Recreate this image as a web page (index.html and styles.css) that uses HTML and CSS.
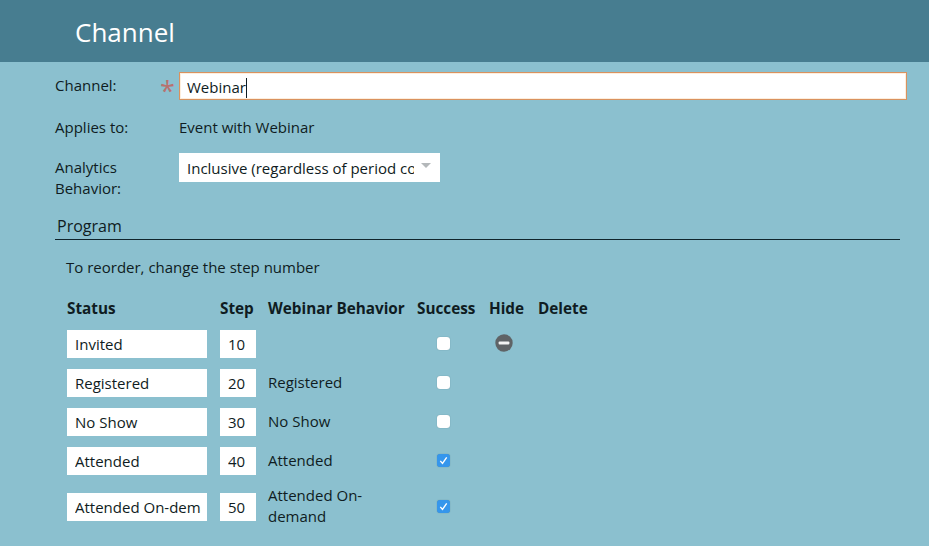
FILE: index.html
```html
<!DOCTYPE html>
<html lang="en">
<head>
  <meta charset="UTF-8">
  <title>Channel</title>
  <link rel="stylesheet" href="styles.css">
</head>
<body>

  <div class="header">
    <h1>Channel</h1>
  </div>

  <div class="content">
    <div class="form-row row-channel">
      <label>Channel:</label>
      <span class="required">*</span>
      <div class="channel-input">Webinar<span class="caret"></span></div>
    </div>

    <div class="form-row row-applies">
      <label>Applies to:</label>
      <span></span>
      <div class="value">Event with Webinar</div>
    </div>

    <div class="form-row row-analytics">
      <label>Analytics<br>Behavior:</label>
      <span></span>
      <div class="select">
        <span class="select-text">Inclusive (regardless of period cost)</span>
        <span class="select-arrow"></span>
      </div>
    </div>

    <h2 class="section-title">Program</h2>
    <p class="hint">To reorder, change the step number</p>

    <div class="status-row status-head">
      <div>Status</div>
      <div>Step</div>
      <div>Webinar Behavior</div>
      <div>Success</div>
      <div>Hide</div>
      <div>Delete</div>
    </div>

    <!-- Status rows -->
    <div class="status-row">
      <input class="status-input" type="text" value="Invited">
      <input class="step-input" type="text" value="10">
      <div></div>
      <div><span class="checkbox"></span></div>
      <div>
        <svg class="hide-icon" width="18" height="18" viewBox="0 0 18 18">
          <circle cx="9" cy="9" r="8.7" fill="#5f6366"/>
          <rect x="3.6" y="7.6" width="10.8" height="2.8" rx="1" fill="#f2f2f2"/>
        </svg>
      </div>
      <div></div>
    </div>

    <div class="status-row">
      <input class="status-input" type="text" value="Registered">
      <input class="step-input" type="text" value="20">
      <div class="behavior">Registered</div>
      <div><span class="checkbox"></span></div>
      <div></div>
      <div></div>
    </div>

    <div class="status-row">
      <input class="status-input" type="text" value="No Show">
      <input class="step-input" type="text" value="30">
      <div class="behavior">No Show</div>
      <div><span class="checkbox"></span></div>
      <div></div>
      <div></div>
    </div>

    <div class="status-row">
      <input class="status-input" type="text" value="Attended">
      <input class="step-input" type="text" value="40">
      <div class="behavior">Attended</div>
      <div>
        <span class="checkbox checked">
          <svg width="13" height="13" viewBox="0 0 13 13"><path d="M3.3 6.9l2.2 2.5 4.2-6" fill="none" stroke="#fff" stroke-width="1.4"/></svg>
        </span>
      </div>
      <div></div>
      <div></div>
    </div>

    <div class="status-row row-last">
      <input class="status-input" type="text" value="Attended On-demand">
      <input class="step-input" type="text" value="50">
      <div class="behavior">Attended On-<br>demand</div>
      <div>
        <span class="checkbox checked">
          <svg width="13" height="13" viewBox="0 0 13 13"><path d="M3.3 6.9l2.2 2.5 4.2-6" fill="none" stroke="#fff" stroke-width="1.4"/></svg>
        </span>
      </div>
      <div></div>
      <div></div>
    </div>
  </div>

</body>
</html>
```

FILE: styles.css
```css
html, body {
  height: 100%;
}

body {
  margin: 0;
  overflow: hidden;
  background-color: #8bc0cf;
  color: #0f1c22;
  font-family: "Open Sans", sans-serif;
  font-size: 15px;
}

.header {
  height: 62px;
  box-sizing: border-box;
  padding-left: 75px;
  background-color: #477d90;
}

.header h1 {
  margin: 0;
  color: #fff;
  font-size: 26px;
  font-weight: 400;
  line-height: 65px;
}

.content {
  padding: 10px 22px 0 55px;
}

.form-row {
  display: grid;
  grid-template-columns: 105px 19px 1fr;
  line-height: 21px;
}

.row-channel {
  height: 28px;
}

.row-channel label {
  padding-top: 3px;
}

.required {
  padding-top: 6px;
  color: #b9716f;
  font-size: 27px;
  line-height: 26px;
}

.channel-input {
  box-sizing: border-box;
  height: 28px;
  padding-left: 7px;
  background-color: #fff;
  border: 1px solid #d9925f;
  box-shadow: inset 0 0 0 1px #fdeedd;
  line-height: 28px;
}

.caret {
  display: inline-block;
  width: 1px;
  height: 20px;
  background-color: #0f1c22;
  vertical-align: -5px;
}

.row-applies {
  margin-top: 17px;
}

.row-analytics {
  margin-top: 15px;
}

.row-analytics label {
  line-height: 21px;
  padding-top: 4px;
}

.select {
  display: flex;
  align-items: center;
  box-sizing: border-box;
  width: 261px;
  height: 29px;
  padding: 1px 0 0 8px;
  background-color: #fff;
}

.select-text {
  width: 227px;
  overflow: hidden;
  white-space: nowrap;
}

.select-arrow {
  width: 0;
  height: 0;
  margin: -5px 0 0 7px;
  border-left: 5px solid transparent;
  border-right: 5px solid transparent;
  border-top: 5px solid #b4b8ba;
}

.section-title {
  margin: 16px 7px 0 0;
  padding: 0 0 2px 2px;
  border-bottom: 1px solid #10242c;
  font-size: 16px;
  font-weight: 400;
  line-height: 22px;
}

.hint {
  margin: 17px 0 0 11px;
  line-height: 21px;
}

.status-row {
  display: grid;
  grid-template-columns: 153px 48px 149px 72px 49px 60px;
  grid-template-rows: 28px;
  align-items: center;
  height: 28px;
  margin: 11px 0 0 12px;
  line-height: 21px;
}

.status-head {
  grid-template-rows: 21px;
  height: 21px;
  margin-top: 20px;
  font-size: 15.3px;
  font-weight: 700;
}

.row-last {
  margin-top: 18px;
}

.behavior {
  margin-top: -2px;
}

.status-input, .step-input {
  box-sizing: border-box;
  height: 28px;
  padding: 0 6px 0 8px;
  background-color: #fff;
  border: none;
  border-radius: 0;
  color: #0f1c22;
  font-family: inherit;
  font-size: 15px;
}

.status-input {
  width: 140px;
}

.step-input {
  width: 36px;
  padding-right: 2px;
}

.checkbox {
  display: block;
  box-sizing: border-box;
  width: 13px;
  height: 13px;
  margin: -2px 0 0 20px;
  background-color: #fff;
  border-radius: 3px;
  box-shadow: 0 0 1px rgba(60, 90, 100, 0.6);
}

.checkbox svg {
  display: block;
}

.checkbox.checked {
  background-color: #3596ec;
}

.hide-icon {
  display: block;
  margin: -2px 0 0 6px;
}
```
